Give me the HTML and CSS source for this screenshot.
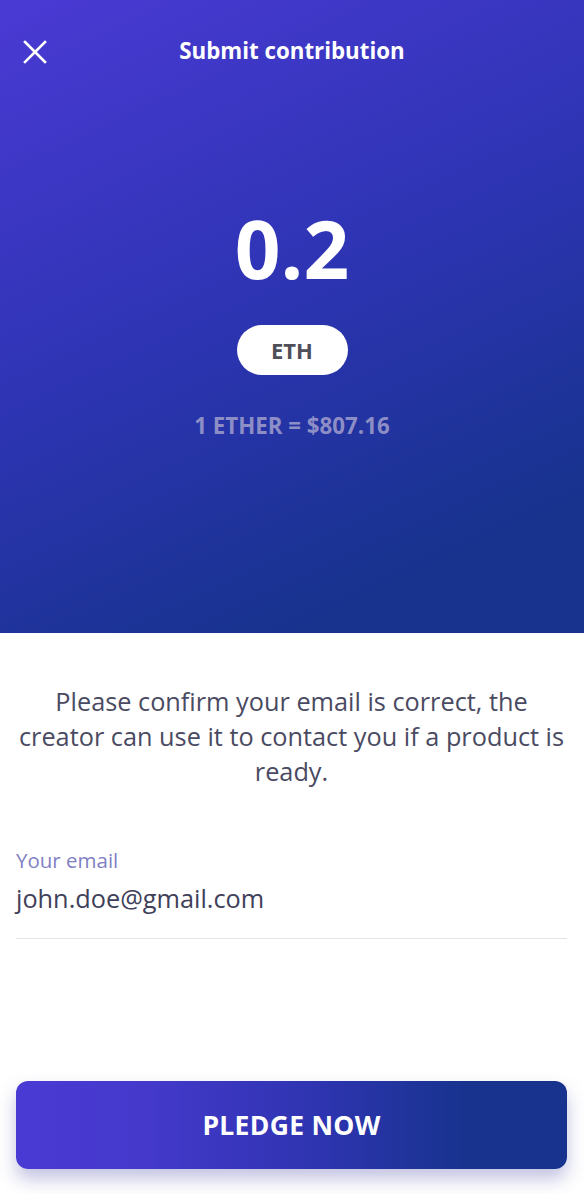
FILE: index.html
```html
<!DOCTYPE html>
<html lang="en">
<head>
<meta charset="utf-8">
<title>Submit contribution</title>
<link rel="stylesheet" href="styles.css">
</head>
<body>
<div class="screen">
  <header class="hero">
    <div class="topbar">
      <button class="close" aria-label="Close">
        <svg width="24" height="24" viewBox="0 0 24 24"><path d="M2 2 L22 22 M22 2 L2 22" stroke="#fff" stroke-width="2.6" stroke-linecap="square" fill="none"/></svg>
      </button>
      <h1 class="title">Submit contribution</h1>
    </div>
    <div class="amount">0.2</div>
    <div class="pill">ETH</div>
    <div class="rate">1 ETHER = $807.16</div>
  </header>
  <main class="content">
    <p class="note">Please confirm your email is correct, the creator can use it to contact you if a product is ready.</p>
    <div class="field">
      <label class="label">Your email</label>
      <div class="value">john.doe@gmail.com</div>
    </div>
    <button class="pledge">PLEDGE NOW</button>
  </main>
</div>
</body>
</html>
```
FILE: styles.css
```css
html, body {
  margin: 0;
  padding: 0;
  background: #fff;
}
body {
  font-family: "Open Sans", "Noto Sans", sans-serif;
}
.screen {
  display: flex;
  flex-direction: column;
  min-height: 1194px;
}
.hero {
  height: 633px;
  box-sizing: border-box;
  background: linear-gradient(155deg, #4a3ad4 0%, #2e34b4 45%, #17338e 85%, #17338e 100%);
  display: flex;
  flex-direction: column;
  align-items: center;
  color: #fff;
}
.topbar {
  position: relative;
  width: 100%;
  height: 102px;
  display: flex;
  align-items: center;
  justify-content: center;
}
.close {
  position: absolute;
  left: 23px;
  top: 40px;
  width: 24px;
  height: 24px;
  padding: 0;
  border: 0;
  background: none;
  display: flex;
}
.title {
  margin: 0;
  font-size: 22.3px;
  font-weight: 700;
  line-height: 30px;
}
.amount {
  margin-top: 96px;
  font-size: 80px;
  font-weight: 700;
  line-height: 100px;
}
.pill {
  margin-top: 27px;
  width: 111px;
  height: 50px;
  border-radius: 25px;
  background: #fff;
  color: #4f4f5a;
  font-size: 22px;
  font-weight: 700;
  display: flex;
  align-items: center;
  justify-content: center;
}
.rate {
  margin-top: 36px;
  font-size: 22.3px;
  font-weight: 700;
  color: #8e8ec6;
  line-height: 30px;
}
.content {
  flex: 1;
  display: flex;
  flex-direction: column;
  padding: 51px 17px 25px 16px;
}
.note {
  margin: 0 -3px;
  font-size: 25.3px;
  line-height: 35px;
  text-align: center;
  color: #4a4a62;
}
.field {
  margin-top: 58px;
  display: flex;
  flex-direction: column;
  border-bottom: 1px solid #e3e3ea;
  padding-bottom: 23px;
}
.label {
  font-size: 20.5px;
  line-height: 26px;
  color: #7f7fc4;
}
.value {
  margin-top: 8px;
  font-size: 25.3px;
  line-height: 34px;
  color: #40405a;
}
.pledge {
  margin-top: auto;
  height: 88px;
  width: 100%;
  border: 0;
  border-radius: 12px;
  background: linear-gradient(90deg, #4a3ad4 0%, #4539cc 22%, #2e34b0 55%, #17338e 82%, #17338e 100%);
  box-shadow: 0 10px 18px rgba(80, 80, 170, 0.35);
  color: #fff;
  font-family: "Open Sans", "Noto Sans", sans-serif;
  font-size: 26.5px;
  font-weight: 700;
  letter-spacing: 0.3px;
}
```
